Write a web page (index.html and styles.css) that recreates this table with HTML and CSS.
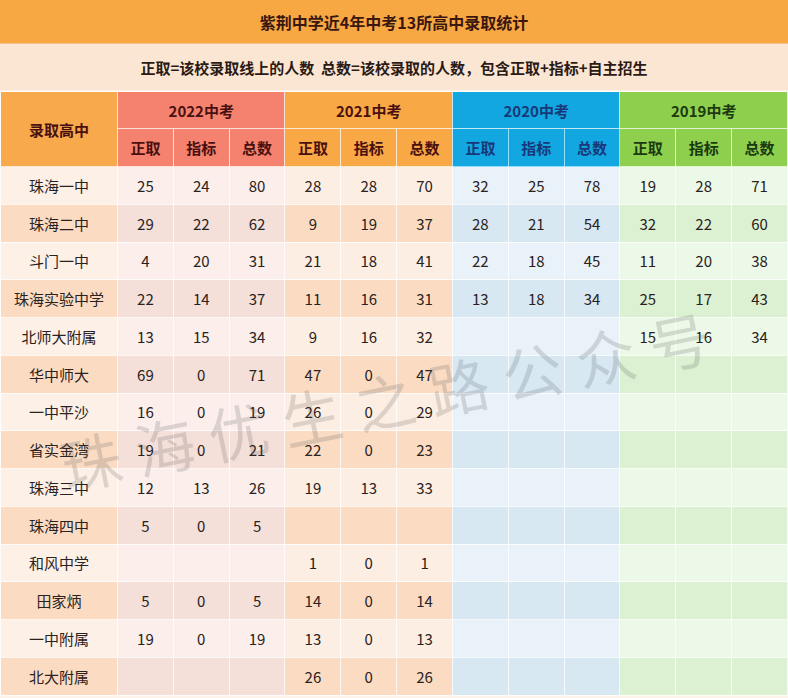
FILE: index.html
```html
<!DOCTYPE html>
<html lang="zh">
<head>
<meta charset="utf-8">
<title>紫荆中学近4年中考13所高中录取统计</title>
<link rel="stylesheet" href="styles.css">
</head>
<body>
<div class="page">
  <div class="title">紫荆中学近4年中考13所高中录取统计</div>
  <div class="note">正取=该校录取线上的人数&nbsp;&nbsp;总数=该校录取的人数，包含正取+指标+自主招生</div>
  <table class="stats">
    <colgroup>
      <col class="c-name">
      <col><col><col><col><col><col><col><col><col><col><col><col>
    </colgroup>
    <thead>
      <tr class="h1">
        <th rowspan="2" class="hname">录取高中</th>
        <th colspan="3" class="y22">2022中考</th>
        <th colspan="3" class="y21">2021中考</th>
        <th colspan="3" class="y20">2020中考</th>
        <th colspan="3" class="y19">2019中考</th>
      </tr>
      <tr class="h2">
        <th class="y22">正取</th><th class="y22">指标</th><th class="y22">总数</th>
        <th class="y21">正取</th><th class="y21">指标</th><th class="y21">总数</th>
        <th class="y20">正取</th><th class="y20">指标</th><th class="y20">总数</th>
        <th class="y19">正取</th><th class="y19">指标</th><th class="y19">总数</th>
      </tr>
    </thead>
    <tbody>
      <tr><td class="n">珠海一中</td><td class="a">25</td><td class="a">24</td><td class="a">80</td><td class="b">28</td><td class="b">28</td><td class="b">70</td><td class="c">32</td><td class="c">25</td><td class="c">78</td><td class="d">19</td><td class="d">28</td><td class="d">71</td></tr>
      <tr><td class="n">珠海二中</td><td class="a">29</td><td class="a">22</td><td class="a">62</td><td class="b">9</td><td class="b">19</td><td class="b">37</td><td class="c">28</td><td class="c">21</td><td class="c">54</td><td class="d">32</td><td class="d">22</td><td class="d">60</td></tr>
      <tr><td class="n">斗门一中</td><td class="a">4</td><td class="a">20</td><td class="a">31</td><td class="b">21</td><td class="b">18</td><td class="b">41</td><td class="c">22</td><td class="c">18</td><td class="c">45</td><td class="d">11</td><td class="d">20</td><td class="d">38</td></tr>
      <tr><td class="n">珠海实验中学</td><td class="a">22</td><td class="a">14</td><td class="a">37</td><td class="b">11</td><td class="b">16</td><td class="b">31</td><td class="c">13</td><td class="c">18</td><td class="c">34</td><td class="d">25</td><td class="d">17</td><td class="d">43</td></tr>
      <tr><td class="n">北师大附属</td><td class="a">13</td><td class="a">15</td><td class="a">34</td><td class="b">9</td><td class="b">16</td><td class="b">32</td><td class="c"></td><td class="c"></td><td class="c"></td><td class="d">15</td><td class="d">16</td><td class="d">34</td></tr>
      <tr><td class="n">华中师大</td><td class="a">69</td><td class="a">0</td><td class="a">71</td><td class="b">47</td><td class="b">0</td><td class="b">47</td><td class="c"></td><td class="c"></td><td class="c"></td><td class="d"></td><td class="d"></td><td class="d"></td></tr>
      <tr><td class="n">一中平沙</td><td class="a">16</td><td class="a">0</td><td class="a">19</td><td class="b">26</td><td class="b">0</td><td class="b">29</td><td class="c"></td><td class="c"></td><td class="c"></td><td class="d"></td><td class="d"></td><td class="d"></td></tr>
      <tr><td class="n">省实金湾</td><td class="a">19</td><td class="a">0</td><td class="a">21</td><td class="b">22</td><td class="b">0</td><td class="b">23</td><td class="c"></td><td class="c"></td><td class="c"></td><td class="d"></td><td class="d"></td><td class="d"></td></tr>
      <tr><td class="n">珠海三中</td><td class="a">12</td><td class="a">13</td><td class="a">26</td><td class="b">19</td><td class="b">13</td><td class="b">33</td><td class="c"></td><td class="c"></td><td class="c"></td><td class="d"></td><td class="d"></td><td class="d"></td></tr>
      <tr><td class="n">珠海四中</td><td class="a">5</td><td class="a">0</td><td class="a">5</td><td class="b"></td><td class="b"></td><td class="b"></td><td class="c"></td><td class="c"></td><td class="c"></td><td class="d"></td><td class="d"></td><td class="d"></td></tr>
      <tr><td class="n">和风中学</td><td class="a"></td><td class="a"></td><td class="a"></td><td class="b">1</td><td class="b">0</td><td class="b">1</td><td class="c"></td><td class="c"></td><td class="c"></td><td class="d"></td><td class="d"></td><td class="d"></td></tr>
      <tr><td class="n">田家炳</td><td class="a">5</td><td class="a">0</td><td class="a">5</td><td class="b">14</td><td class="b">0</td><td class="b">14</td><td class="c"></td><td class="c"></td><td class="c"></td><td class="d"></td><td class="d"></td><td class="d"></td></tr>
      <tr><td class="n">一中附属</td><td class="a">19</td><td class="a">0</td><td class="a">19</td><td class="b">13</td><td class="b">0</td><td class="b">13</td><td class="c"></td><td class="c"></td><td class="c"></td><td class="d"></td><td class="d"></td><td class="d"></td></tr>
      <tr><td class="n">北大附属</td><td class="a"></td><td class="a"></td><td class="a"></td><td class="b">26</td><td class="b">0</td><td class="b">26</td><td class="c"></td><td class="c"></td><td class="c"></td><td class="d"></td><td class="d"></td><td class="d"></td></tr>
    </tbody>
  </table>
  <div class="watermark">珠海优生之路公众号</div>
</div>
</body>
</html>
```

FILE: styles.css
```css
* { box-sizing: border-box; }
html, body { margin: 0; padding: 0; }
body {
  font-family: "Noto Sans CJK SC", "Noto Sans", sans-serif;
  background: #fdf3ea;
  color: #2a2220;
}
.page {
  position: relative;
  width: 788px;
  height: 698px;
  overflow: hidden;
}
.title {
  height: 44px;
  background: #f7a843;
  color: #3a1710;
  font-weight: 700;
  font-size: 16px;
  display: flex;
  align-items: center;
  justify-content: center;
  border-bottom: 1px solid #f3c28a;
}
.note {
  height: 47px;
  background: #fbe6d4;
  color: #2b1a14;
  font-weight: 700;
  font-size: 15px;
  display: flex;
  align-items: center;
  justify-content: center;
  border-bottom: 1px solid #fdf2ea;
}
.stats {
  width: 788px;
  table-layout: fixed;
  border-collapse: collapse;
}
.c-name { width: 117px; }
.stats th, .stats td {
  padding: 0;
  text-align: center;
  border: 1px solid rgba(255, 255, 255, 0.75);
}
.stats th {
  font-weight: 700;
  font-size: 15px;
  color: #4a1010;
}
.h1 th { height: 37px; }
.h2 th { height: 38px; }
.hname { background: #f8a94b; color: #4a1a10; }
th.y22 { background: #f4826f; }
th.y21 { background: #f8a845; }
th.y20 { background: #12a7e0; color: #17397a; }
th.y19 { background: #8fcf4e; color: #1b3a10; }
.h2 th.y20 { border-color: rgba(180, 240, 255, 0.8); }

.stats td {
  height: 37.75px;
  font-size: 15px;
  color: #2a2220;
}
.stats td.n { background: #fdf0e7; }
.stats td.a { background: #fbeeeb; }
.stats td.b { background: #fdeee3; }
.stats td.c { background: #e9f1f9; }
.stats td.d { background: #ecf8e8; }
.stats tbody tr:nth-child(even) td.n { background: #fbdcc3; }
.stats tbody tr:nth-child(even) td.a { background: #f4dfd9; }
.stats tbody tr:nth-child(even) td.b { background: #fbdcc3; }
.stats tbody tr:nth-child(even) td.c { background: #d7e8f3; }
.stats tbody tr:nth-child(even) td.d { background: #dbf1d2; }

.watermark {
  position: absolute;
  left: 392px;
  top: 398px;
  transform: translate(-50%, -50%) rotate(-11.5deg);
  font-size: 60px;
  line-height: 1;
  letter-spacing: 15px;
  white-space: nowrap;
  color: rgba(80, 80, 80, 0.19);
  font-weight: 400;
  pointer-events: none;
}
```
